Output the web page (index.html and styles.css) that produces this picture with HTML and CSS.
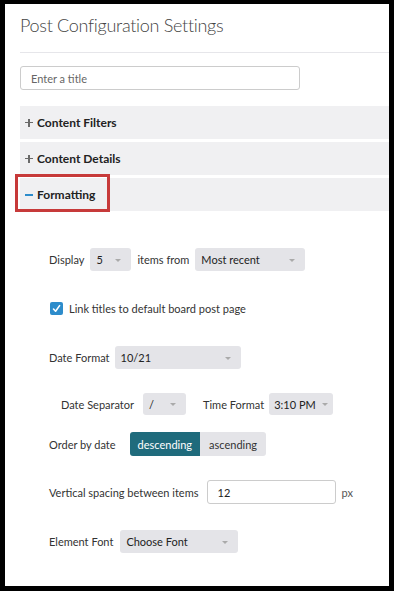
FILE: index.html
```html
<!DOCTYPE html>
<html>
<head>
    <title>Post Configuration Settings</title>
    <link rel="stylesheet" href="styles.css">
</head>
<body>
    <div class="panel">
        <h1 class="panel-title">Post Configuration Settings</h1>

        <div class="title-field">
            <input type="text" placeholder="Enter a title">
        </div>

        <div class="section">
            <span class="toggle plus"></span>Content Filters
        </div>
        <div class="section">
            <span class="toggle plus"></span>Content Details
        </div>
        <div class="section open">
            <span class="toggle minus"></span>Formatting
            <div class="highlight"></div>
        </div>

        <div class="settings">
            <div class="row display-row">
                <span>Display</span>
                <div class="select w-count">5<i class="caret"></i></div>
                <span>items from</span>
                <div class="select w-from">Most recent<i class="caret"></i></div>
            </div>

            <div class="row check-row">
                <span class="checkbox">
                    <svg width="9" height="9" viewBox="0 0 9 9"><path d="M1.5 5 L3.6 7.2 L7.6 1.6" fill="none" stroke="#fff" stroke-width="1.6" stroke-linecap="round" stroke-linejoin="round"/></svg>
                </span>
                <span>Link titles to default board post page</span>
            </div>

            <div class="row date-row">
                <span>Date Format</span>
                <div class="select w-date">10/21<i class="caret"></i></div>
            </div>

            <div class="row sep-row">
                <span class="sep-label">Date Separator</span>
                <div class="select w-sep">/<i class="caret"></i></div>
                <span class="time-label">Time Format</span>
                <div class="select w-time">3:10 PM<i class="caret"></i></div>
            </div>

            <div class="row order-row">
                <span>Order by date</span>
                <div class="btn-group">
                    <button class="active">descending</button>
                    <button>ascending</button>
                </div>
            </div>

            <div class="row spacing-row">
                <span class="spacing-label">Vertical spacing between items</span>
                <input class="spacing-input" type="text" value="12">
                <span class="unit">px</span>
            </div>

            <div class="row font-row">
                <span class="font-label">Element Font</span>
                <div class="select w-font">Choose Font<i class="caret"></i></div>
            </div>
        </div>
    </div>
</body>
</html>
```

FILE: styles.css
```css
body {
    margin: 0;
    background-color: #000;
    font-family: Lato, "Open Sans", sans-serif;
    color: #333;
}

/* white settings panel inside the black frame */
.panel {
    margin: 4px 5px 0 5px;
    height: 582px;
    background-color: #fff;
    padding: 11px 0 0 15px;
    box-sizing: border-box;
    overflow: hidden;
}

.panel-title {
    margin: 0;
    font-size: 18px;
    font-weight: 300;
    letter-spacing: -0.3px;
    line-height: 21px;
    color: #444;
    padding-bottom: 16px;
    border-bottom: 1px solid #e6e6ea;
}

.title-field {
    margin-top: 13px;
}

.title-field input {
    width: 280px;
    height: 24px;
    box-sizing: border-box;
    border: 1px solid #ccc;
    border-radius: 3px;
    padding: 0 10px;
    font-family: Lato, sans-serif;
    font-size: 11px;
    color: #333;
}

.title-field input::placeholder {
    color: #666;
}

/* accordion headers */
.section {
    position: relative;
    height: 33px;
    margin-top: 3px;
    display: flex;
    align-items: center;
    padding-left: 4px;
    background-color: #f0f0f2;
    font-size: 12px;
    font-weight: bold;
    color: #222;
}

.title-field + .section {
    margin-top: 16px;
}

/* + and - drawn as small bars */
.toggle {
    position: relative;
    width: 8px;
    height: 8px;
    margin: 0 4px 0 1px;
}

.toggle::before,
.toggle.plus::after {
    content: "";
    position: absolute;
    left: 0;
    top: 3.25px;
    width: 8px;
    height: 1.5px;
    background-color: #6a6a6a;
}

.toggle.plus::after {
    left: 3.25px;
    top: 0;
    width: 1.5px;
    height: 8px;
}

.toggle.minus::before {
    height: 2px;
    top: 3px;
    background-color: #2d8ccb;
}

/* red annotation box */
.highlight {
    position: absolute;
    left: -5px;
    top: -4px;
    width: 95px;
    height: 38px;
    box-sizing: border-box;
    border: 3px solid #c73a3a;
}

/* formatting options */
.settings {
    padding: 37px 0 0 29px;
    font-size: 11px;
}

.row {
    height: 23px;
    display: flex;
    align-items: center;
    gap: 5px;
    white-space: nowrap;
}

.display-row {
    gap: 6px;
}

.check-row {
    gap: 6px;
    margin-top: 26px;
}

.date-row {
    margin-top: 26px;
}

.sep-row {
    height: 22px;
    margin-top: 24px;
    padding-left: 12px;
}

.sep-label {
    margin-right: 4px;
}

.time-label {
    margin-left: 12px;
}

.order-row {
    height: 24px;
    margin-top: 17px;
}

.spacing-row {
    height: 24px;
    margin-top: 24px;
}

.spacing-label {
    margin-right: 3px;
}

.font-row {
    margin-top: 26px;
}

.font-label {
    margin-right: 2px;
}

.checkbox {
    width: 13px;
    height: 13px;
    border-radius: 2px;
    background-color: #2d8ccb;
    display: flex;
    align-items: center;
    justify-content: center;
    margin-left: 1px;
}

.select {
    position: relative;
    height: 100%;
    box-sizing: border-box;
    padding-left: 6px;
    display: flex;
    align-items: center;
    background-color: #e4e4e8;
    border-radius: 3px;
    color: #222;
}

.caret {
    position: absolute;
    right: 10px;
    top: calc(50% - 1px);
    border-left: 3px solid transparent;
    border-right: 3px solid transparent;
    border-top: 3px solid #aaa;
}

.w-count { width: 41px; }
.w-from { width: 110px; }
.w-date { width: 126px; }
.w-sep { width: 43px; }
.w-time { width: 64px; padding-left: 5px; }
.w-time .caret { right: 5px; }
.w-font { width: 118px; }

.btn-group {
    display: flex;
    margin-left: 9px;
}

.btn-group button {
    height: 24px;
    border: none;
    padding: 0 9px;
    font-family: Lato, sans-serif;
    font-size: 11px;
    background-color: #e4e4e8;
    color: #333;
    cursor: pointer;
}

.btn-group button:first-child {
    border-radius: 3px 0 0 3px;
}

.btn-group button:last-child {
    border-radius: 0 3px 3px 0;
}

.btn-group button.active {
    background-color: #1f6b7c;
    color: #fff;
    padding: 0 8px;
}

.spacing-input {
    width: 129px;
    height: 24px;
    box-sizing: border-box;
    border: 1px solid #ccc;
    border-radius: 3px;
    padding: 0 10px;
    font-family: Lato, sans-serif;
    font-size: 11px;
    color: #222;
}

.unit {
    margin-left: 1px;
    color: #555;
}
```
